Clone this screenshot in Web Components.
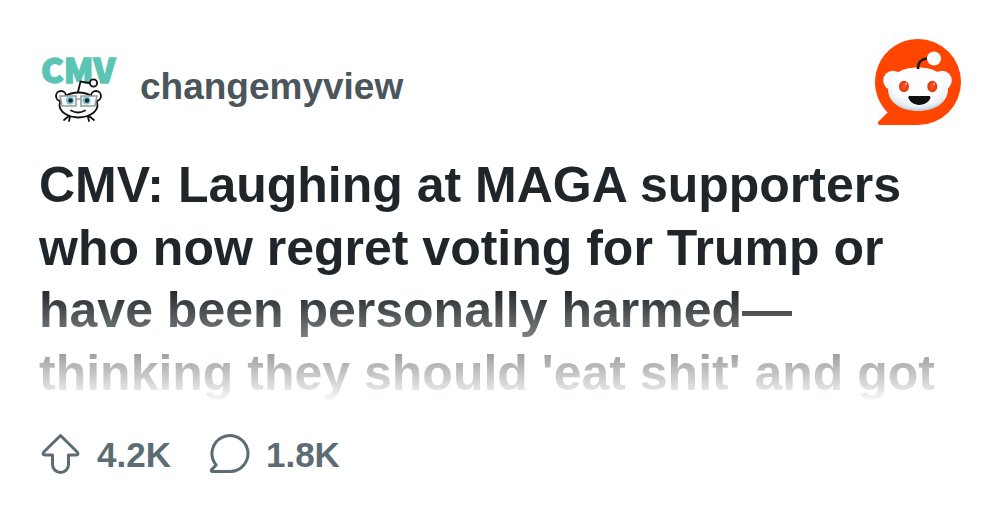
<!DOCTYPE html>
<html lang="en">
<head>
<meta charset="utf-8">
<meta name="viewport" content="width=device-width, initial-scale=1">
<title>changemyview</title>
<style>
body { margin: 0; background: #fff; font-family: "Liberation Sans", Arial, sans-serif; }
</style>
</head>
<body>
<post-card>
  <community-avatar slot="avatar"></community-avatar>
  <span slot="community">changemyview</span>
  <site-logo slot="logo"></site-logo>
  <post-title slot="title">CMV: Laughing at MAGA supporters who now regret voting for Trump or have been personally harmed—thinking they should 'eat shit' and got</post-title>
  <post-stat slot="stats" kind="votes">4.2K</post-stat>
  <post-stat slot="stats" kind="comments">1.8K</post-stat>
</post-card>
<script>
class Base extends HTMLElement {
  constructor() {
    super();
    this.attachShadow({ mode: "open" }).innerHTML = this.render();
  }
}

customElements.define("community-avatar", class extends Base {
  render() {
    return `<style>
      :host { display: block; flex: none; width: 76px; height: 76px; }
      svg { display: block; overflow: visible; }
      text { font: 900 34px "Noto Sans CJK SC", sans-serif; fill: #5bc4b4; stroke: #5bc4b4; stroke-width: 1.5; }
    </style>
    <svg width="76" height="76" viewBox="0 0 76 76" role="img" aria-label="Community icon">
      <text x="2" y="34">CMV</text>
      <g stroke="#111" stroke-width="1.8" fill="none" stroke-linecap="round">
        <path d="M30 67l-5 4M31 68l-1 4M49 68l1 4M50 67l5 4" />
        <path d="M39 43l2.500-10.500 9 1.500" />
        <circle cx="54.500" cy="34" r="3.600" fill="#fff"/>
        <circle cx="22" cy="47" r="5" fill="#fff"/>
        <circle cx="57" cy="47" r="5" fill="#fff"/>
        <ellipse cx="39.500" cy="56" rx="19" ry="12.500" fill="#fff"/>
        <path d="M32 61.500q7 4 14 0"/>
      </g>
      <g stroke="#959b9c" stroke-width="1.600" fill="#f5f8f8">
        <path d="M21 47h16v10H23zM42 47h16l-2 10H42zM37 50h5"/>
      </g>
      <circle cx="31" cy="51.500" r="4" fill="#86c3d0"/><circle cx="47.500" cy="51.500" r="4" fill="#86c3d0"/>
      <circle cx="31.500" cy="51.500" r="2.300" fill="#102d3b"/><circle cx="48" cy="51.500" r="2.300" fill="#102d3b"/>
    </svg>`;
  }
});

customElements.define("site-logo", class extends Base {
  render() {
    return `<style>
      :host { display: block; flex: none; align-self: flex-start; width: 86px; height: 86px; }
      svg { display: block; }
    </style>
    <svg width="86" height="86" viewBox="0 0 86 86" role="img" aria-label="Reddit">
      <defs>
        <radialGradient id="face" cx=".5" cy=".35" r=".66"><stop offset=".6" stop-color="#fff"/><stop offset=".85" stop-color="#e6eff4"/><stop offset="1" stop-color="#b4c5cf"/></radialGradient>
        <radialGradient id="eye"><stop offset="0" stop-color="#ff5a1f"/><stop offset="1" stop-color="#dc3514"/></radialGradient>
      </defs>
      <path fill="#ff4500" d="M43 0a43 43 0 0 1 0 86H5c-2 0-3-2-1.500-3.500L12.600 73.400A43 43 0 0 1 43 0z"/>
      <circle cx="18" cy="41.500" r="9.800" fill="#f9fbfc"/><circle cx="67" cy="41.500" r="9.800" fill="#f9fbfc"/>
      <path fill="url(#face)" d="M43 28.500c18 0 30 8.500 30 21.500 0 13-12 22-30 22S13 63 13 50c0-13 12-21.500 30-21.500z"/>
      <path d="M43 30c0-7 3-10.500 11-10.500" fill="none" stroke="#181818" stroke-width="2.600"/>
      <circle cx="59" cy="19.500" r="7" fill="#fff"/>
      <ellipse cx="29" cy="47.500" rx="5" ry="5.800" fill="url(#eye)"/><ellipse cx="57.300" cy="47.500" rx="5" ry="5.800" fill="url(#eye)"/>
      <circle cx="31" cy="45" r="1" fill="#ffc3a5"/><circle cx="59" cy="45" r="1" fill="#ffc3a5"/>
      <path fill="#101010" d="M35 57h18.500c1.500 0 2.300.6 2 1.600C54.500 63 49.500 66 44.300 66S34.500 63 33.300 58.600c-.2-1 .4-1.600 1.700-1.600z"/>
    </svg>`;
  }
});

customElements.define("post-title", class extends Base {
  render() {
    return `<style>
      :host { display: block; }
      h1 { margin: 0; font-size: 50px; line-height: 1.25; font-weight: bold; color: #1f2529;
        -webkit-mask-image: linear-gradient(#000 54%, transparent);
        mask-image: linear-gradient(#000 54%, transparent); }
    </style><h1><slot></slot></h1>`;
  }
});

customElements.define("post-stat", class extends Base {
  render() {
    const icon = this.getAttribute("kind") === "votes"
      ? `<path d="M21.500 2.500 38.200 19c1.500 1.600.8 3-1.200 3h-7.500v9.500a8 8 0 0 1-16 0V22H6c-2 0-2.700-1.400-1.200-3z"/>`
      : `<path d="M21.500 38.500H4.500c-1.200 0-1.600-1-.8-1.900l4.400-4.600A18 18 0 1 1 21.500 38.500z"/>`;
    return `<style>
      :host { display: flex; align-items: center; gap: 16px; color: #5c6c74; font-size: 35px; line-height: 40px; font-weight: bold; }
      svg { display: block; flex: none; }
      span { padding-top: 2px; }
      path { fill: none; stroke: currentColor; stroke-width: 3; stroke-linejoin: round; }
    </style>
    <svg width="42" height="42" viewBox="0 0 42 42" aria-hidden="true">${icon}</svg>
    <span><slot></slot></span>`;
  }
});

customElements.define("post-card", class extends Base {
  render() {
    return `<style>
      :host { display: block; padding: 39px; }
      header { display: flex; align-items: center; gap: 25px; min-height: 96px; }
      .community { flex: 1; min-width: 0; font-size: 37px; line-height: 48px; font-weight: bold; color: #4a565c; }
      main { margin-top: 19px; }
      footer { display: flex; gap: 37px; margin-top: 29px; }
    </style>
    <article>
      <header>
        <slot name="avatar"></slot>
        <div class="community"><slot name="community"></slot></div>
        <slot name="logo"></slot>
      </header>
      <main><slot name="title"></slot></main>
      <footer><slot name="stats"></slot></footer>
    </article>`;
  }
});
</script>
</body>
</html>
